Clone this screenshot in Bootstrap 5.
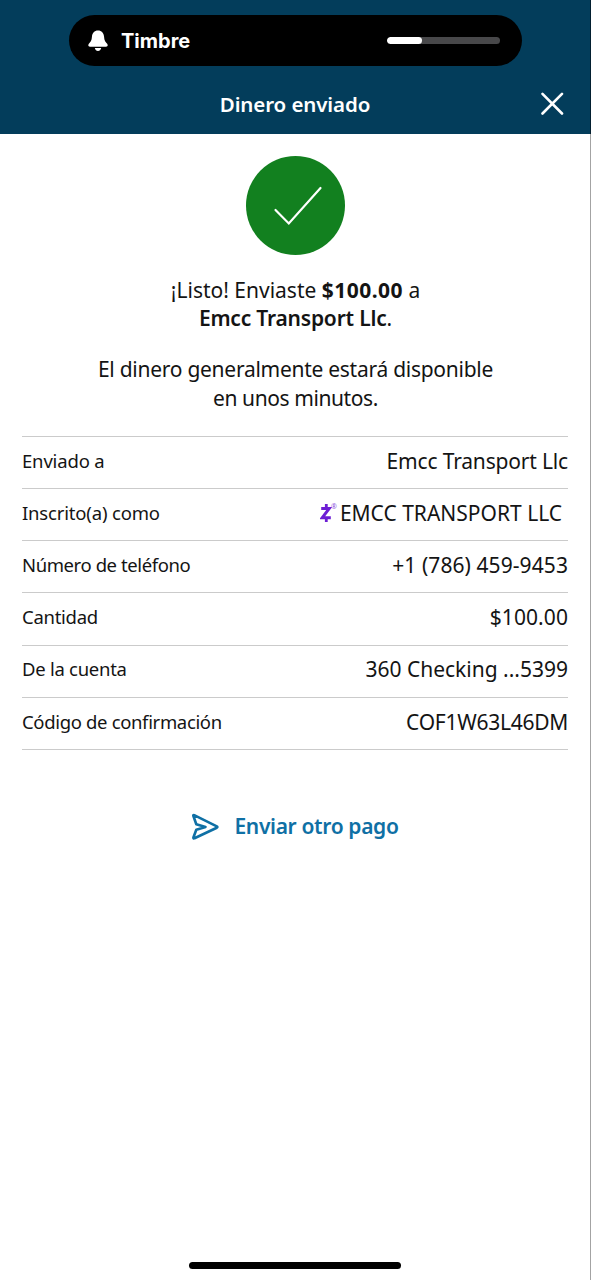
<!DOCTYPE html>
<html lang="es">
<head>
    <meta charset="UTF-8">
    <meta name="viewport" content="width=device-width, initial-scale=1">
    <title>Dinero enviado</title>
    <link href="https://cdn.jsdelivr.net/npm/bootstrap@5.3.0/dist/css/bootstrap.min.css" rel="stylesheet">
    <style>
        body { font-family: "Noto Sans", sans-serif; font-size: 21px; line-height: 28.4px; color: #141414; background: #fff; }
        svg { display: block; flex-shrink: 0; }
        .screen { height: 1280px; border-right: 1px solid #a3a3a3; }
        .topbar { height: 134px; margin-right: -1px; padding-top: 15px; background: #033d5b; border-right: 1px solid #021f30; }

        /* volume pill */
        .island { width: 453px; height: 51px; margin-left: 69px; padding: 0 22px 0 19px; border-radius: 26px; background: #000; }
        .island-label { font-family: Inter, sans-serif; font-size: 20px; font-weight: 650; margin-left: 13px; padding-top: 1px; }
        .volume { width: 113px; height: 7px; background: #48484a; border-radius: 4px; }
        .volume .progress-bar { background: #fff; border-radius: 4px; }

        .title-row { height: 68px; padding: 7px 26px 0; }
        .title-row h1 { font-size: 20.5px; font-weight: 600; line-height: 28px; letter-spacing: -.1px; }
        .side { width: 24px; }

        .done { margin-top: 22px; }
        .message { margin-top: 21px; padding-left: 1px; }
        .message p { margin-bottom: 22.6px; }
        .sum { letter-spacing: .45px; }
        .semi { font-weight: 650; letter-spacing: -.2px; }

        .details { margin: 1px 22px 0; border-top: 1px solid #cbcbcb; }
        .details li { height: 52.2px; padding-bottom: 3px; border-bottom: 1px solid #cbcbcb; }
        .name { font-size: 18.5px; }
        .registered { margin-right: 6px; }
        .reg-sign { font-size: 7px; line-height: 8px; margin: -12px 3px 0 -1px; color: #8b50dc; }

        /* letter spacing steps */
        .ls-up { letter-spacing: .08px; }
        .ls-1 { letter-spacing: -.17px; }
        .ls-2 { letter-spacing: -.27px; }
        .ls-3 { letter-spacing: -.34px; }
        .ls-4 { letter-spacing: -.41px; }

        .again { margin-top: 62px; color: #0f70a5; font-weight: 600; gap: 15px; }
        .home-bar { width: 212px; height: 7px; margin-bottom: 11px; border-radius: 4px; background: #000; }
    </style>
</head>
<body>

    <div class="screen d-flex flex-column">
        <header class="topbar text-white">
            <div class="island d-flex align-items-center">
                <svg width="20" height="22" viewBox="0 0 20 22" fill="#fff"><path d="M10 .5C6.400 .5 4.200 3 3.900 7 3.600 11 2.600 11.800 1 13.500-.3 15.300.3 16.800 2 16.800H18C19.700 16.800 20.300 15.300 19 13.500 17.400 11.800 16.400 11 16.100 7 15.800 3 13.600.5 10 .5ZM6.800 18H13.200C12.800 20 11.500 20.900 10 20.900S7.200 20 6.800 18Z"/></svg>
                <span class="island-label">Timbre</span>
                <div class="progress volume ms-auto"><div class="progress-bar" style="width: 31%"></div></div>
            </div>
            <div class="title-row d-flex align-items-center justify-content-between">
                <span class="side"></span>
                <h1 class="mb-0">Dinero enviado</h1>
                <svg width="24" height="24" viewBox="0 0 24 24" stroke="#fff" stroke-width="2.600" stroke-linecap="round"><path d="M2.500 1.800 22 21.500M22 1.800 2.500 21.500"/></svg>
            </div>
        </header>

        <svg class="done mx-auto" width="99" height="99" viewBox="0 0 99 99"><circle cx="49.500" cy="49.500" r="49.500" fill="#12801f"/><path d="M29.500 54 42.800 67.500 74.500 32" fill="none" stroke="#fff" stroke-width="2.200" stroke-linecap="round"/></svg>

        <div class="message text-center">
            <p>¡Listo! Enviaste <b class="sum">$100.00</b> a<br><b class="semi">Emcc Transport Llc</b>.</p>
            <p class="ls-2">El dinero generalmente estará disponible<br><span class="ls-4">en unos minutos.</span></p>
        </div>

        <ul class="details list-unstyled">
            <li class="d-flex align-items-center justify-content-between">
                <span class="name ls-1">Enviado a</span>
                <span class="ls-1">Emcc Transport Llc</span>
            </li>
            <li class="d-flex align-items-center justify-content-between">
                <span class="name ls-1">Inscrito(a) como</span>
                <span class="registered d-flex align-items-center">
                    <svg width="12" height="20" viewBox="0 0 12 20" fill="none" stroke="#6d1ed4"><path d="M1.200 5.400H9.300L2.300 14.700H10.800" stroke-width="3"/><path d="M6.300 1V5M6.300 15V19" stroke-width="2.800"/></svg>
                    <span class="reg-sign">®</span>
                    <span>EMCC TRANSPORT LLC</span>
                </span>
            </li>
            <li class="d-flex align-items-center justify-content-between">
                <span class="name ls-4">Número de teléfono</span>
                <span class="ls-up">+1 (786) 459-9453</span>
            </li>
            <li class="d-flex align-items-center justify-content-between">
                <span class="name ls-2">Cantidad</span>
                <span class="ls-up">$100.00</span>
            </li>
            <li class="d-flex align-items-center justify-content-between">
                <span class="name ls-2">De la cuenta</span>
                <span>360 Checking ...5399</span>
            </li>
            <li class="d-flex align-items-center justify-content-between">
                <span class="name ls-3">Código de confirmación</span>
                <span class="ls-2">COF1W63L46DM</span>
            </li>
        </ul>

        <div class="again d-flex align-items-center justify-content-center">
            <svg width="28" height="28" viewBox="0 0 28 28" fill="none" stroke="#0f70a5" stroke-width="2.600" stroke-linecap="round" stroke-linejoin="round"><path d="M3.200 3.200Q2 2.600 2.400 4L5.300 12.300 14.500 15 5.300 17.700 2.400 25.500Q2.200 27 3.500 26.200L25.800 15.700Q27 15 25.800 14.300Z"/></svg>
            <span class="ls-3">Enviar otro pago</span>
        </div>

        <div class="home-bar mx-auto mt-auto"></div>
    </div>

    <script src="https://cdn.jsdelivr.net/npm/bootstrap@5.3.0/dist/js/bootstrap.bundle.min.js"></script>
</body>
</html>
